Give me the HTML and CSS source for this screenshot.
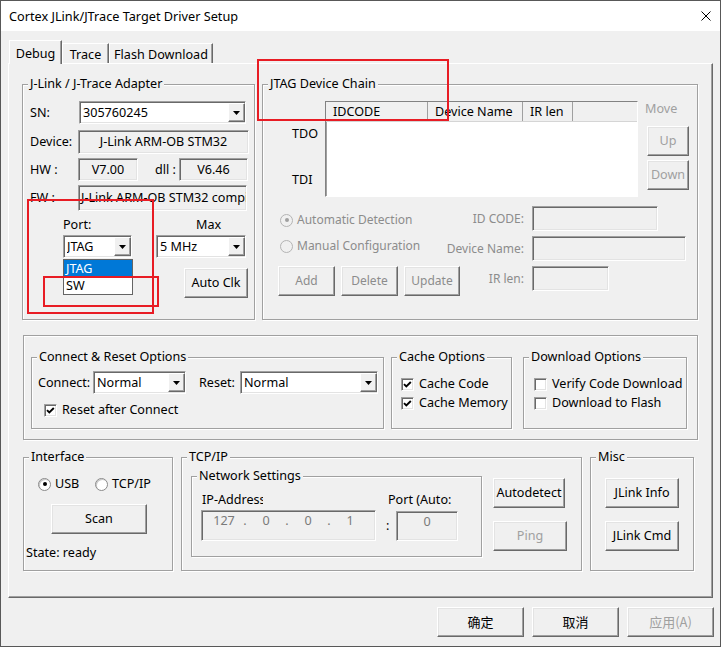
FILE: index.html
```html
<!DOCTYPE html>
<html lang="en">
<head>
<meta charset="utf-8">
<title>Cortex JLink/JTrace Target Driver Setup</title>
<link rel="stylesheet" href="styles.css">
</head>
<body>
<div class="window">
  <div class="titlebar">
    <span class="title">Cortex JLink/JTrace Target Driver Setup</span>
    <svg class="close" width="10" height="10" viewBox="0 0 10 10"><path d="M0.5 0.5L9.5 9.5M9.5 0.5L0.5 9.5" stroke="#000" stroke-width="1" fill="none"/></svg>
  </div>
  <div class="client">
    <div class="tabs">
      <div class="tab tab-debug">Debug</div>
      <div class="tab tab-trace">Trace</div>
      <div class="tab tab-flash">Flash Download</div>
    </div>
    <div class="pane">
      <div class="top-row">
        <div class="group adapter">
          <div class="gt">J-Link / J-Trace Adapter</div>
          <div class="row a-sn">
            <span class="sn-lbl">SN:</span>
            <div class="combo sn-combo"><span class="ctext">305760245</span><span class="dbtn"><svg width="7" height="4" viewBox="0 0 7 4"><path d="M0 0H7L3.5 4Z" fill="#000"/></svg></span></div>
          </div>
          <div class="row a-dev">
            <span class="lbl48">Device:</span>
            <div class="field dev-field">J-Link ARM-OB STM32</div>
          </div>
          <div class="row a-hw">
            <span class="lbl48">HW :</span>
            <div class="field hw-field">V7.00</div>
            <span class="dll-lbl">dll :</span>
            <div class="field dll-field">V6.46</div>
          </div>
          <div class="row a-fw">
            <span class="lbl48">FW :</span>
            <div class="field fw-field">J-Link ARM-OB STM32 compiled Aug 22 2012 11:44:56</div>
          </div>
          <div class="row a-portlbl">
            <span class="port-lbl">Port:</span>
            <span>Max</span>
          </div>
          <div class="row a-combos">
            <div class="combo port-combo"><span class="ctext">JTAG</span><span class="dbtn"><svg width="7" height="4" viewBox="0 0 7 4"><path d="M0 0H7L3.5 4Z" fill="#000"/></svg></span>
              <div class="dd-list">
                <div class="dd-item sel">JTAG</div>
                <div class="dd-item">SW</div>
              </div>
            </div>
            <div class="combo max-combo"><span class="ctext">5 MHz</span><span class="dbtn"><svg width="7" height="4" viewBox="0 0 7 4"><path d="M0 0H7L3.5 4Z" fill="#000"/></svg></span></div>
          </div>
          <div class="a-btn">
            <div class="btn autoclk">Auto Clk</div>
          </div>
        </div>

        <div class="group chain">
          <div class="gt">JTAG Device Chain</div>
          <div class="c-top">
            <div class="c-labels">
              <span class="tdo">TDO</span>
              <span class="tdi">TDI</span>
            </div>
            <div class="list">
              <div class="lh">
                <span class="lh-id">IDCODE</span>
                <span class="lh-name">Device Name</span>
                <span class="lh-ir">IR len</span>
                <span class="lh-rest"></span>
              </div>
            </div>
            <div class="c-move">
              <span class="move-lbl">Move</span>
              <div class="btn disabled up">Up</div>
              <div class="btn disabled down">Down</div>
            </div>
          </div>
          <div class="c-bottom">
            <div class="c-left">
              <div class="radio-row r1"><span class="radio dis checked"></span><span>Automatic Detection</span></div>
              <div class="radio-row r2"><span class="radio dis"></span><span>Manual Configuration</span></div>
              <div class="c-btns">
                <div class="btn disabled add">Add</div>
                <div class="btn disabled delete">Delete</div>
                <div class="btn disabled update">Update</div>
              </div>
            </div>
            <div class="c-right">
              <span class="c-lbl">ID CODE:</span><div class="field id-field"></div>
              <span class="c-lbl">Device Name:</span><div class="field name-field"></div>
              <span class="c-lbl">IR len:</span><div class="field ir-field"></div>
            </div>
          </div>
        </div>
      </div>

      <div class="group mid-frame">
        <div class="group connect">
          <div class="gt">Connect &amp; Reset Options</div>
          <div class="row cr-row">
            <span class="conn-lbl">Connect:</span>
            <div class="combo conn-combo"><span class="ctext">Normal</span><span class="dbtn"><svg width="7" height="4" viewBox="0 0 7 4"><path d="M0 0H7L3.5 4Z" fill="#000"/></svg></span></div>
            <span class="reset-lbl">Reset:</span>
            <div class="combo reset-combo"><span class="ctext">Normal</span><span class="dbtn"><svg width="7" height="4" viewBox="0 0 7 4"><path d="M0 0H7L3.5 4Z" fill="#000"/></svg></span></div>
          </div>
          <div class="cb-row rac"><span class="cb"><svg width="11" height="11" viewBox="0 0 11 11"><path d="M2 5.2L4.3 7.5L8.8 3" stroke="#000" stroke-width="1.9" fill="none"/></svg></span><span>Reset after Connect</span></div>
        </div>
        <div class="group cache">
          <div class="gt">Cache Options</div>
          <div class="cb-row cb1"><span class="cb"><svg width="11" height="11" viewBox="0 0 11 11"><path d="M2 5.2L4.3 7.5L8.8 3" stroke="#000" stroke-width="1.9" fill="none"/></svg></span><span>Cache Code</span></div>
          <div class="cb-row cb2"><span class="cb"><svg width="11" height="11" viewBox="0 0 11 11"><path d="M2 5.2L4.3 7.5L8.8 3" stroke="#000" stroke-width="1.9" fill="none"/></svg></span><span>Cache Memory</span></div>
        </div>
        <div class="group download">
          <div class="gt">Download Options</div>
          <div class="cb-row cb1"><span class="cb"></span><span>Verify Code Download</span></div>
          <div class="cb-row cb2"><span class="cb"></span><span>Download to Flash</span></div>
        </div>
      </div>

      <div class="bottom-row">
        <div class="group iface">
          <div class="gt">Interface</div>
          <div class="if-radios">
            <div class="if-item"><span class="radio checked"></span><span>USB</span></div>
            <div class="if-item"><span class="radio"></span><span>TCP/IP</span></div>
          </div>
          <div class="btn scan">Scan</div>
          <div class="state">State: ready</div>
        </div>
        <div class="group tcp">
          <div class="gt">TCP/IP</div>
          <div class="tcp-body">
            <div class="group ns">
              <div class="gt">Network Settings</div>
              <div class="ns-labels">
                <span class="ip-lbl">IP-Address:</span>
                <span class="portauto-lbl">Port (Auto:</span>
              </div>
              <div class="ns-boxes">
                <div class="field ip-box"><span class="seg">127</span><span class="dot">.</span><span class="seg">0</span><span class="dot">.</span><span class="seg">0</span><span class="dot">.</span><span class="seg">1</span></div>
                <span class="colon">:</span>
                <div class="field port-box">0</div>
              </div>
            </div>
            <div class="tcp-btns">
              <div class="btn autodetect">Autodetect</div>
              <div class="btn disabled ping">Ping</div>
            </div>
          </div>
        </div>
        <div class="group misc">
          <div class="gt">Misc</div>
          <div class="btn jinfo">JLink Info</div>
          <div class="btn jcmd">JLink Cmd</div>
        </div>
      </div>
    </div>
    <div class="dlg">
      <div class="btn">确定</div>
      <div class="btn">取消</div>
      <div class="btn disabled">应用(A)</div>
    </div>
  </div>
  <div class="mark mark1"></div>
  <div class="mark mark2"></div>
  <div class="mark mark3"></div>
</div>
</body>
</html>
```

FILE: styles.css
```css
* { box-sizing: border-box; }
html, body { margin: 0; }
body {
  font-family: "Noto Sans", "Noto Sans CJK SC", sans-serif;
  font-size: 12.6px;
  line-height: 16px;
  color: #000;
  background: #f0f0f0;
}

.window {
  position: relative;
  width: 721px;
  height: 647px;
  border: 1px solid #585858;
  background: #f0f0f0;
  display: flex;
  flex-direction: column;
  overflow: hidden;
}

.titlebar {
  flex: none;
  height: 30px;
  background: #fff;
  display: flex;
  align-items: center;
  padding: 0 9px 0 8px;
}
.title { flex: 1; font-size: 12.7px; }
.close { display: block; }

.client {
  flex: 1;
  padding: 9px 6px 0 7px;
  display: flex;
  flex-direction: column;
}

/* tabs */
.tabs {
  display: flex;
  align-items: flex-end;
  height: 23px;
  margin-left: 1px;
  position: relative;
  z-index: 1;
}
.tab {
  height: 20px;
  border: 1px solid;
  border-bottom: 0;
  border-color: #fff #696969 #696969 #fff;
  box-shadow: inset -1px 0 #a0a0a0;
  display: flex;
  justify-content: center;
  align-items: center;
  padding-top: 2px;
  background: #f0f0f0;
}
.tab-debug { width: 53px; height: 24px; margin-bottom: -1px; }
.tab-trace { width: 47px; }
.tab-flash { width: 104px; }

.pane {
  flex: none;
  width: 705px;
  height: 535px;
  border: 1px solid;
  border-color: #fff #696969 #696969 #fff;
  box-shadow: inset -1px -1px #a0a0a0;
}

/* common controls */
.group {
  --pad: 0px;
  border: 1px solid #a0a0a0;
  box-shadow: inset 1px 1px #fff, 1px 1px #fff;
  padding-left: var(--pad);
}
.gt {
  position: relative;
  width: max-content;
  height: 16px;
  margin: -9px 0 -7px calc(5px - var(--pad));
  padding: 0 2px;
  background: #f0f0f0;
  white-space: nowrap;
}
.row { display: flex; align-items: center; }

.field {
  display: flex;
  align-items: center;
  justify-content: center;
  background: #f0f0f0;
  border: 1px solid;
  border-color: #a0a0a0 #fff #fff #a0a0a0;
  box-shadow: inset 1px 1px #696969, inset -1px -1px #e3e3e3;
  white-space: nowrap;
  overflow: hidden;
}

.combo {
  display: flex;
  align-items: center;
  height: 23px;
  background: #fff;
  border: 1px solid;
  border-color: #a0a0a0 #fff #fff #a0a0a0;
  box-shadow: inset 1px 1px #696969, inset -1px -1px #e3e3e3;
  padding-left: 3px;
}
.ctext { flex: 1; white-space: nowrap; overflow: hidden; }
.dbtn {
  flex: none;
  width: 17px;
  align-self: stretch;
  margin: 1px 0 1px 0;
  display: flex;
  align-items: center;
  justify-content: center;
  background: #f0f0f0;
  border: 1px solid;
  border-color: #fff #696969 #696969 #fff;
  box-shadow: inset -1px -1px #a0a0a0;
}
.dbtn svg { display: block; }

.btn {
  display: flex;
  align-items: center;
  justify-content: center;
  background: #f0f0f0;
  border: 1px solid;
  border-color: #fff #696969 #696969 #fff;
  box-shadow: inset -1px -1px #a0a0a0, inset 1px 1px #e3e3e3;
  white-space: nowrap;
}
.btn.disabled { color: #a0a0a0; }

.cb-row { display: flex; align-items: center; height: 16px; gap: 5px; white-space: nowrap; }
.cb {
  flex: none;
  width: 13px;
  height: 13px;
  background: #fff;
  border: 1px solid;
  border-color: #a0a0a0 #fff #fff #a0a0a0;
  box-shadow: inset 1px 1px #696969, inset -1px -1px #e3e3e3;
}
.cb svg { display: block; }

.radio {
  position: relative;
  flex: none;
  width: 13px;
  height: 13px;
  border-radius: 50%;
  border: 1px solid #8a8a8a;
  background: #fff;
  box-shadow: inset 1px 1px #c8c8c8;
}
.radio.checked::after {
  content: "";
  position: absolute;
  left: 3.5px;
  top: 3.5px;
  width: 4px;
  height: 4px;
  border-radius: 50%;
  background: #000;
}
.radio.dis { border-color: #b4b4b4; background: #f0f0f0; box-shadow: none; }
.radio.dis.checked::after { background: #a0a0a0; }

/* top row */
.top-row { display: flex; gap: 7px; margin: 20px 0 0 13px; }

.adapter { --pad: 7px; width: 233px; height: 236px; }
.a-sn { margin-top: 16px; height: 23px; }
.sn-lbl { width: 49px; }
.sn-combo { width: 167px; }
.lbl48 { width: 48px; flex: none; white-space: nowrap; }
.a-dev { margin-top: 6px; height: 24px; }
.dev-field { width: 171px; height: 24px; }
.a-hw { margin-top: 4px; height: 23px; }
.hw-field { width: 60px; height: 23px; }
.dll-lbl { margin-left: 17px; width: 24px; white-space: nowrap; }
.dll-field { width: 69px; height: 23px; }
.a-fw { margin-top: 4px; height: 26px; }
.fw-field { width: 169px; height: 26px; justify-content: flex-start; padding-left: 2px; }
.a-portlbl { margin-top: 6px; height: 16px; padding-left: 33px; }
.port-lbl { width: 133px; }
.a-combos { margin-top: 2px; height: 23px; padding-left: 33px; }
.port-combo { width: 69px; position: relative; }
.max-combo { width: 90px; margin-left: 24px; }
.a-btn { margin-top: 10px; padding-left: 154px; }
.autoclk { width: 64px; height: 30px; }

.dd-list {
  position: absolute;
  left: -1px;
  top: 23px;
  width: 70px;
  border: 1px solid #646464;
  background: #fff;
  z-index: 2;
}
.dd-item { height: 17px; line-height: 17px; padding-left: 2px; }
.dd-item.sel { background: #0078d7; color: #fff; }

.chain { width: 436px; height: 236px; }
.c-top { display: flex; margin-top: 16px; height: 96px; }
.c-labels { width: 62px; flex: none; padding-left: 29px; display: flex; flex-direction: column; }
.tdo { margin-top: 25px; }
.tdi { margin-top: 30px; }
.list {
  width: 313px;
  height: 96px;
  flex: none;
  background: #fff;
  border: 1px solid;
  border-color: #828282 #fff #fff #828282;
  box-shadow: inset 1px 1px #a0a0a0;
}
.lh { display: flex; height: 20px; background: #f0f0f0; border-bottom: 1px solid #d5d5d5; }
.lh span { display: flex; align-items: center; padding-left: 7px; border-right: 1px solid #a0a0a0; white-space: nowrap; }
.lh-id { width: 102px; }
.lh-name { width: 95px; }
.lh-ir { width: 50px; }
.lh .lh-rest { flex: 1; border-right: 0; }
.c-move { margin-left: 9px; width: 42px; display: flex; flex-direction: column; }
.move-lbl { margin-left: -2px; height: 15px; color: #a0a0a0; }
.up { margin-top: 10px; height: 30px; }
.down { margin-top: 4px; height: 30px; }

.c-bottom { display: flex; font-size: 12px; color: #8c8c8c; }
.c-left { width: 178px; flex: none; padding-left: 17px; }
.radio-row { display: flex; align-items: center; height: 16px; gap: 4px; white-space: nowrap; }
.r1 { margin-top: 15px; }
.r2 { margin-top: 10px; }
.c-btns { display: flex; gap: 6px; margin: 12px 0 0 -2px; }
.c-btns .btn { height: 30px; color: #8c8c8c; }
.add { width: 57px; flex: none; }
.delete { width: 57px; flex: none; }
.update { width: 56px; flex: none; }
.c-right {
  margin-top: 9px;
  display: grid;
  grid-template-columns: 83px auto;
  column-gap: 8px;
  row-gap: 5px;
  align-items: center;
  align-content: start;
}
.c-lbl { justify-self: end; white-space: nowrap; }
.id-field { width: 126px; height: 25px; }
.name-field { width: 154px; height: 25px; }
.ir-field { width: 77px; height: 25px; }

/* middle */
.mid-frame {
  width: 675px;
  height: 105px;
  margin: 15px 0 0 14px;
  display: flex;
  align-items: flex-start;
  padding: 21px 0 0 7px;
}
.connect { width: 353px; height: 72px; flex: none; }
.cache { --pad: 9px; width: 121px; height: 72px; flex: none; margin-left: 7px; }
.download { --pad: 10px; width: 164px; height: 72px; flex: none; margin-left: 11px; }
.cr-row { margin-top: 13px; height: 23px; padding-left: 6px; }
.conn-lbl { width: 55px; }
.conn-combo { width: 93px; }
.reset-lbl { margin-left: 13px; width: 41px; }
.reset-combo { width: 138px; }
.rac { margin-top: 8px; padding-left: 12px; }
.cb1 { margin-top: 18px; }
.cb2 { margin-top: 3px; }

/* bottom */
.bottom-row { display: flex; gap: 8px; margin: 17px 0 0 14px; }
.iface { --pad: 2px; width: 150px; height: 114px; }
.if-radios { display: flex; align-items: center; height: 16px; margin-top: 18px; padding-left: 12px; }
.if-item { display: flex; align-items: center; gap: 4px; width: 57px; white-space: nowrap; }
.scan { width: 96px; height: 30px; margin: 12px 0 0 25px; }
.state { margin-top: 11px; height: 16px; }

.tcp { width: 401px; height: 114px; }
.tcp-body { display: flex; }
.ns { width: 291px; height: 81px; margin: 18px 0 0 9px; flex: none; }
.ns-labels { display: flex; align-items: center; height: 16px; margin-top: 15px; padding-left: 10px; }
.ip-lbl { width: 61px; overflow: hidden; white-space: nowrap; flex: none; }
.portauto-lbl { margin-left: 125px; white-space: nowrap; }
.ns-boxes { display: flex; align-items: center; margin-top: 2px; padding-left: 9px; }
.ip-box {
  width: 175px;
  height: 31px;
  align-items: flex-start;
  justify-content: flex-start;
  padding: 2px 0 0 6px;
  color: #7a7a7a;
}
.seg { width: 32px; text-align: center; }
.dot { width: 10px; text-align: center; }
.colon { width: 10px; margin-left: 10px; }
.port-box { width: 62px; height: 30px; align-items: flex-start; padding-top: 2px; color: #7a7a7a; }
.tcp-btns { margin-left: 11px; display: flex; flex-direction: column; }
.autodetect { margin-top: 20px; width: 72px; height: 30px; }
.ping { margin-top: 13px; width: 74px; height: 30px; }

.misc { --pad: 14px; width: 104px; height: 114px; }
.jinfo { margin-top: 20px; width: 74px; height: 30px; }
.jcmd { margin-top: 13px; width: 74px; height: 30px; }

/* dialog buttons */
.dlg { display: flex; justify-content: flex-end; gap: 8px; margin-top: 9px; }
.dlg .btn { width: 87px; height: 30px; font-family: "Noto Sans CJK SC", sans-serif; font-size: 13px; }

/* red annotation rectangles */
.mark { position: absolute; border: 2px solid #e81c24; z-index: 5; pointer-events: none; }
.mark1 { left: 26px; top: 198px; width: 127px; height: 115px; }
.mark2 { left: 42px; top: 275px; width: 116px; height: 31px; }
.mark3 { left: 256px; top: 58px; width: 192px; height: 62px; }
```
